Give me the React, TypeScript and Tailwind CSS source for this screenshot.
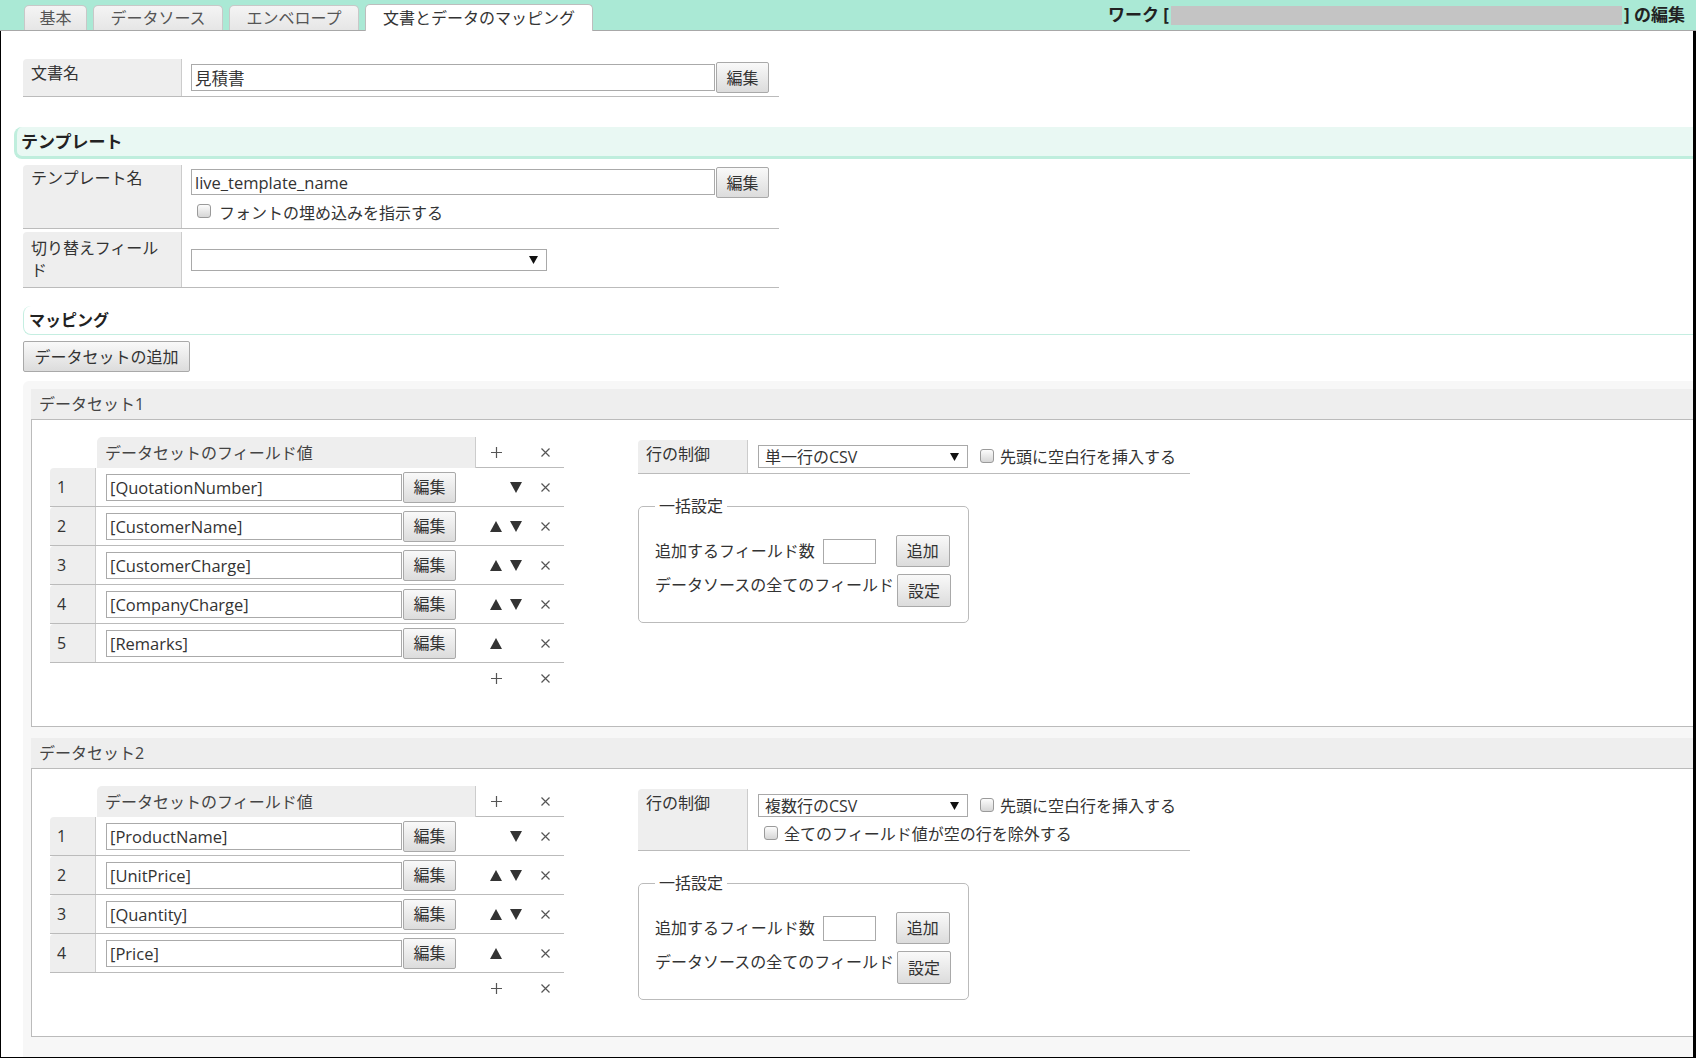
import React from "react";

type FieldRow = { name: string; up: boolean; down: boolean };

const Btn = ({ children, className = "" }: { children: React.ReactNode; className?: string }) => (
  <button
    type="button"
    className={
      "flex shrink-0 items-center justify-center border border-[#a9a9a9] rounded-[2px] bg-linear-to-b from-[#f9f9f9] to-[#dcdcdc] text-[16px] text-[#333] leading-none " +
      className
    }
  >
    {children}
  </button>
);

const Check = ({ className = "" }: { className?: string }) => (
  <span
    className={
      "inline-block w-[14px] h-[14px] shrink-0 rounded-[3px] border border-[#9a9a9a] bg-linear-to-b from-[#fcfcfc] to-[#d6d6d6] " +
      className
    }
  />
);

const Caret = () => (
  <svg width="9" height="8" viewBox="0 0 9 8">
    <path d="M0 0h9L4.5 8z" fill="#111" />
  </svg>
);

const Up = () => (
  <svg width="12" height="11" viewBox="0 0 12 11">
    <path d="M6 0L12 11H0z" fill="#333" />
  </svg>
);

const Down = () => (
  <svg width="12" height="11" viewBox="0 0 12 11">
    <path d="M0 0h12L6 11z" fill="#333" />
  </svg>
);

const Plus = () => (
  <svg width="11" height="11" viewBox="0 0 11 11">
    <path d="M5.5 0v11M0 5.5h11" stroke="#555" strokeWidth="1.2" />
  </svg>
);

const Cross = () => (
  <svg width="9" height="9" viewBox="0 0 9 9">
    <path d="M0.5 0.5l8 8M8.5 0.5l-8 8" stroke="#555" strokeWidth="1.2" />
  </svg>
);

const Select = ({ value, className = "" }: { value: string; className?: string }) => (
  <div
    className={
      "flex shrink-0 items-center justify-between border border-[#a9a9a9] bg-white pl-[6px] pr-[8px] " + className
    }
  >
    <span className="leading-none">{value}</span>
    <Caret />
  </div>
);

const TextBox = ({ value, className = "" }: { value: string; className?: string }) => (
  <input
    readOnly
    defaultValue={value}
    className={"shrink-0 border border-[#aaa] bg-white px-[3px] text-[16.5px] text-[#333] outline-none " + className}
  />
);

const FieldTable = ({ rows }: { rows: FieldRow[] }) => (
  <div className="w-[514px] shrink-0">
    <div className="flex h-[31px]">
      <div className="w-[47px]" />
      <div className="w-[379px] bg-[#eee] rounded-tl-[5px] border-r border-[#ccc] pl-[8px] flex items-center text-[#444]">
        データセットのフィールド値
      </div>
      <div className="flex-1 flex items-center border-b border-[#bbb]">
        <span className="w-[40px] flex justify-center">
          <Plus />
        </span>
        <span className="ml-[10px] w-[38px] flex justify-center">
          <Cross />
        </span>
      </div>
    </div>
    {rows.map((r, i) => (
      <div key={i} className="flex items-center h-[39px] border-b border-[#bbb]">
        <div className="w-[46px] h-full bg-[#eee] rounded-tl-[4px] border-r border-[#ccc] pl-[7px] flex items-center">
          {i + 1}
        </div>
        <TextBox value={r.name} className="ml-[10px] w-[296px] h-[27px]" />
        <Btn className="ml-[1px] w-[53px] h-[31px]">編集</Btn>
        <span className="ml-[30px] w-[20px] flex justify-center">{r.up && <Up />}</span>
        <span className="w-[20px] flex justify-center">{r.down && <Down />}</span>
        <span className="w-[38px] flex justify-center">
          <Cross />
        </span>
      </div>
    ))}
    <div className="flex items-center h-[30px] pl-[426px]">
      <span className="w-[40px] flex justify-center">
        <Plus />
      </span>
      <span className="ml-[10px] w-[38px] flex justify-center">
        <Cross />
      </span>
    </div>
  </div>
);

const Dataset = ({
  title,
  rows,
  control,
  extra,
  className = "",
}: {
  title: string;
  rows: FieldRow[];
  control: string;
  extra?: boolean;
  className?: string;
}) => (
  <div className={className}>
    <div className="h-[31px] bg-[#eee] border-b border-[#bbb] pl-[8px] flex items-center text-[#444]">{title}</div>
    <div className="bg-white border-l border-b border-[#bbb] flex items-start pt-[17px] pl-[18px] pb-[33px]">
      <FieldTable rows={rows} />
      <div className="ml-[74px] mt-[3px]">
        <div className="w-[552px] flex border-b border-[#bbb]">
          <div className="w-[110px] shrink-0 bg-[#eee] rounded-tl-[4px] border-r border-[#ccc] pl-[8px] pt-[3px]">
            行の制御
          </div>
          <div className="pl-[10px] pt-[5px] pb-[5px]">
            <div className="flex items-center h-[23px]">
              <Select value={control} className="w-[210px] h-[23px]" />
              <Check className="ml-[12px] -mt-[2px]" />
              <span className="ml-[6px] whitespace-nowrap">先頭に空白行を挿入する</span>
            </div>
            {extra && (
              <div className="flex items-center h-[22px] mt-[6px] ml-[6px]">
                <Check className="-mt-[2px]" />
                <span className="ml-[6px] whitespace-nowrap">全てのフィールド値が空の行を除外する</span>
              </div>
            )}
          </div>
        </div>
        <fieldset className="mt-[21px] w-[331px] border border-[#bbb] rounded-[5px] px-[16px] pb-[15px]">
          <legend className="px-[4px] leading-[22px]">一括設定</legend>
          <div className="mt-[18px] flex items-center h-[32px] whitespace-nowrap">
            <span>追加するフィールド数</span>
            <TextBox value="" className="ml-[8px] w-[53px] h-[25px]" />
            <Btn className="ml-[20px] w-[54px] h-[32px]">追加</Btn>
          </div>
          <div className="mt-[7px] flex items-start h-[33px] whitespace-nowrap">
            <span>データソースの全てのフィールド</span>
            <Btn className="ml-[3px] w-[54px] h-[33px]">設定</Btn>
          </div>
        </fieldset>
      </div>
    </div>
  </div>
);

const tabs = ["基本", "データソース", "エンベロープ"];
const tabWidths = ["w-[63px]", "w-[130px]", "w-[130px]"];

const set1: FieldRow[] = [
  { name: "[QuotationNumber]", up: false, down: true },
  { name: "[CustomerName]", up: true, down: true },
  { name: "[CustomerCharge]", up: true, down: true },
  { name: "[CompanyCharge]", up: true, down: true },
  { name: "[Remarks]", up: true, down: false },
];

const set2: FieldRow[] = [
  { name: "[ProductName]", up: false, down: true },
  { name: "[UnitPrice]", up: true, down: true },
  { name: "[Quantity]", up: true, down: true },
  { name: "[Price]", up: true, down: false },
];

export default function App() {
  return (
    <div className="font-['Open_Sans','Noto_Sans_CJK_JP',sans-serif] w-[1696px] h-[1058px] bg-white text-[16px] leading-[22px] text-[#333] overflow-hidden flex flex-col">
      {/* tab bar */}
      <div className="h-[31px] shrink-0 bg-[#aae9d5] border-b border-[#a8a8a8] flex items-end pl-[24px]">
        {tabs.map((t, i) => (
          <div
            key={t}
            className={
              tabWidths[i] +
              " h-[25px] mr-[6px] rounded-t-[5px] border border-b-0 border-[#c8c8c8] bg-linear-to-b from-[#f4f4f4] to-[#e6e6e6] text-[#555] flex items-center justify-center"
            }
          >
            {t}
          </div>
        ))}
        <div className="w-[228px] h-[27px] -mb-px rounded-t-[5px] border border-b-0 border-[#bdbdbd] bg-white text-[#333] flex items-center justify-center">
          文書とデータのマッピング
        </div>
        <div className="ml-auto self-center pr-[11px] flex items-center font-bold text-[17px] text-[#222]">
          <span>ワーク [</span>
          <span className="w-[451px] h-[19px] bg-[#c4c4c4] mx-[2px]" />
          <span>] の編集</span>
        </div>
      </div>

      <div className="flex-1 flex flex-col border-l border-r-[3px] border-b border-black pl-[13px] pt-[28px]">
        {/* document name */}
        <div className="ml-[9px] w-[756px] h-[38px] flex border-b border-[#bbb]">
          <div className="w-[159px] shrink-0 bg-[#eee] rounded-tl-[4px] border-r border-[#ccc] px-[8px] pt-[3px]">
            文書名
          </div>
          <div className="flex items-start pl-[9px] pt-[3px]">
            <TextBox value="見積書" className="mt-[2px] w-[524px] h-[27px]" />
            <Btn className="ml-[1px] w-[53px] h-[31px]">編集</Btn>
          </div>
        </div>

        {/* template header */}
        <div className="mt-[30px] h-[32px] bg-[#e9f8f3] rounded-l-[8px] border-l-[3px] border-b-[3px] border-[#bfeedd] flex items-center pl-[4px] text-[17px] font-bold text-[#222]">
          テンプレート
        </div>

        <div className="ml-[9px] mt-[6px] w-[756px] h-[64px] flex border-b border-[#bbb]">
          <div className="w-[159px] shrink-0 bg-[#eee] rounded-tl-[4px] border-r border-[#ccc] px-[8px] pt-[2px]">
            テンプレート名
          </div>
          <div className="pl-[9px] pt-[2px]">
            <div className="flex items-start">
              <TextBox value="live_template_name" className="mt-[2px] w-[524px] h-[26px]" />
              <Btn className="ml-[1px] w-[53px] h-[31px]">編集</Btn>
            </div>
            <div className="flex items-center h-[22px] mt-[4px] pl-[6px]">
              <Check className="-mt-[4px]" />
              <span className="ml-[8px]">フォントの埋め込みを指示する</span>
            </div>
          </div>
        </div>

        <div className="ml-[9px] mt-[3px] w-[756px] h-[56px] flex border-b border-[#bbb]">
          <div className="w-[159px] shrink-0 bg-[#eee] rounded-tl-[4px] border-r border-[#ccc] px-[8px] pt-[5px]">
            切り替えフィール
            <br />ド
          </div>
          <div className="pl-[9px] pt-[17px]">
            <Select value="" className="w-[356px] h-[22px]" />
          </div>
        </div>

        {/* mapping */}
        <div className="ml-[9px] mt-[18px] h-[29px] rounded-l-[8px] border-l border-b border-[#c5eee1] flex items-center pl-[5px] font-bold text-[#222]">
          マッピング
        </div>
        <Btn className="ml-[9px] mt-[6px] w-[167px] h-[31px]">データセットの追加</Btn>

        <div className="ml-[9px] mt-[9px] flex-1 bg-[#f7f7f7] rounded-tl-[6px] pt-[8px] pl-[8px]">
          <Dataset title="データセット1" rows={set1} control="単一行のCSV" />
          <Dataset title="データセット2" rows={set2} control="複数行のCSV" extra className="mt-[11px]" />
        </div>
      </div>
    </div>
  );
}
